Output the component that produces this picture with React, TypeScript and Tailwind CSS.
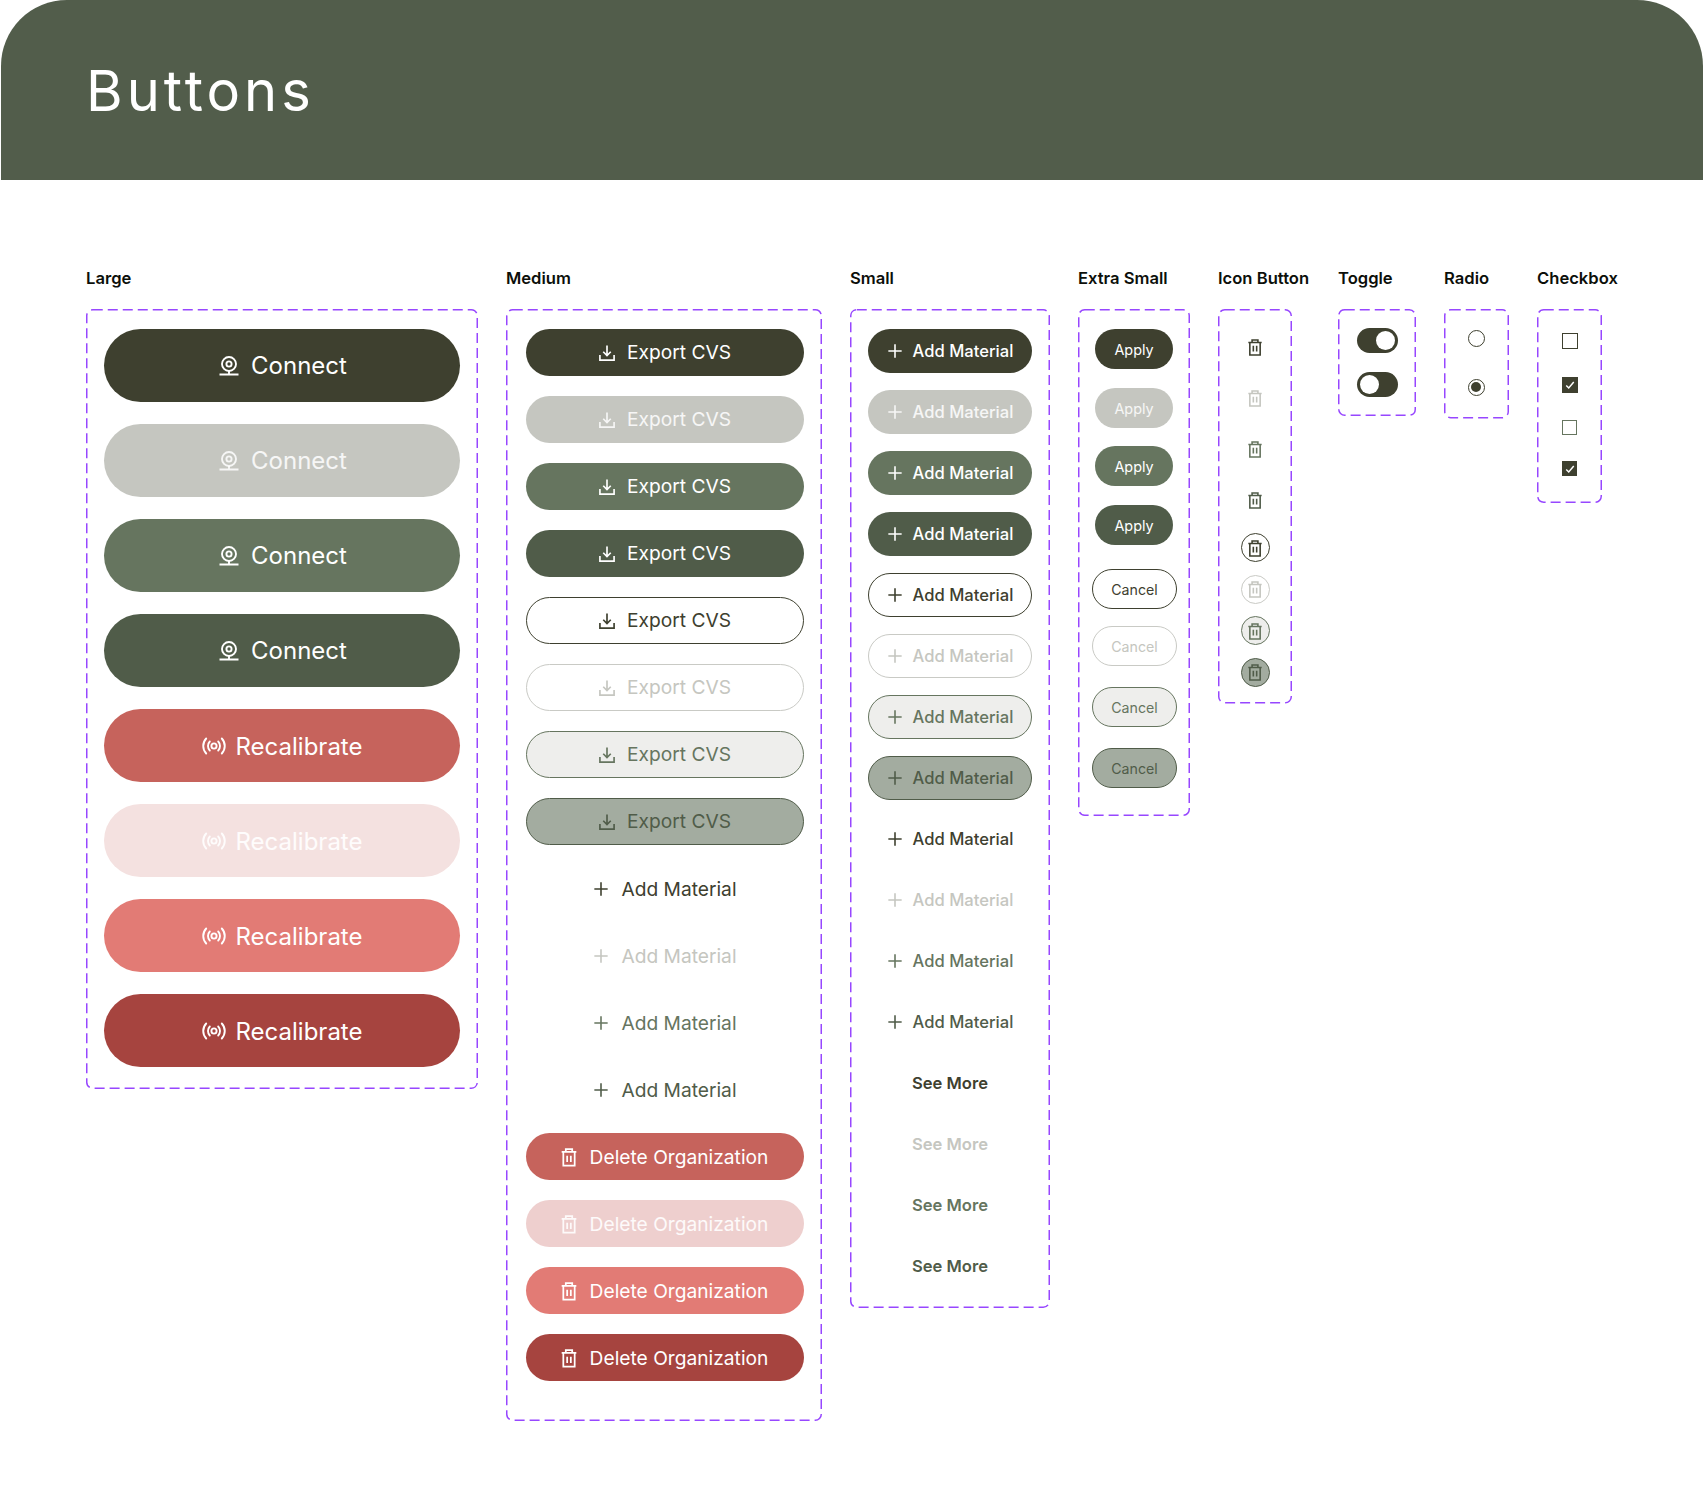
import React from "react";

type IconProps = { size: number; sw?: number };

const Webcam = ({ size, sw = 1.9 }: IconProps) => (
  <svg width={size} height={size} viewBox="0 0 24 24" fill="none" stroke="currentColor" strokeWidth={sw}>
    <circle cx="12" cy="10" r="7" />
    <circle cx="12" cy="10" r="2.6" />
    <path d="M2.5 20.5h19M12 17v3.5" />
  </svg>
);

const Broadcast = ({ size, sw = 1.9 }: IconProps) => (
  <svg width={size} height={size} viewBox="0 0 24 24" fill="none" stroke="currentColor" strokeWidth={sw} strokeLinecap="round">
    <circle cx="12" cy="12" r="2.6" />
    <path d="M7.8 7.5a6.5 6.5 0 0 0 0 9M16.2 7.5a6.5 6.5 0 0 1 0 9M4.2 4.5a11 11 0 0 0 0 15M19.8 4.5a11 11 0 0 1 0 15" />
  </svg>
);

const Download = ({ size, sw = 2 }: IconProps) => (
  <svg width={size} height={size} viewBox="0 0 24 24" fill="none" stroke="currentColor" strokeWidth={sw}>
    <path d="M12 3v12M7.5 10.5l4.5 4.5 4.5-4.5M3.5 14.5v6h17v-6" />
  </svg>
);

const Trash = ({ size, sw = 1.9 }: IconProps) => (
  <svg width={size} height={size} viewBox="0 0 24 24" fill="none" stroke="currentColor" strokeWidth={sw}>
    <path d="M4 6.5h16M8.5 6.5V3.5h7v3M5.8 6.5v15h12.4v-15M10 10.5v7M14 10.5v7" />
  </svg>
);

const Plus = ({ size, sw = 1.9 }: IconProps) => (
  <svg width={size} height={size} viewBox="0 0 24 24" fill="none" stroke="currentColor" strokeWidth={sw}>
    <path d="M12 4v16M4 12h16" />
  </svg>
);

const Check = () => (
  <svg width="10" height="10" viewBox="0 0 12 12" fill="none" stroke="#ffffff" strokeWidth="1.8">
    <path d="M1.5 6.5l3 3 6-7" />
  </svg>
);

const Box = ({ className, children }: { className: string; children: React.ReactNode }) => (
  <div className={`relative flex flex-col items-center ${className}`}>
    <svg className="absolute inset-0 w-full h-full pointer-events-none" fill="none">
      <rect
        x="0.75"
        y="0.75"
        rx="6"
        className="[width:calc(100%-1.5px)] [height:calc(100%-1.5px)]"
        stroke="#9747FF"
        strokeWidth="1.5"
        strokeDasharray="10 5"
      />
    </svg>
    {children}
  </div>
);

const Column = ({ label, width = "", children }: { label: string; width?: string; children: React.ReactNode }) => (
  <div className={`flex flex-col items-start shrink-0 ${width}`}>
    <div className="h-5 leading-5 text-[16.6px] font-semibold text-[#0c0f0a] mb-[21px] whitespace-nowrap">{label}</div>
    {children}
  </div>
);

const fills = [
  "bg-[#3E402F] text-white",
  "bg-[#C5C6C0] text-white/85",
  "bg-[#66755F] text-white",
  "bg-[#505C49] text-white",
];
const outlines = [
  "bg-white border-[1.5px] border-[#3E402F] text-[#3E402F]",
  "bg-white border-[1.5px] border-[#C9CAC5] text-[#C5C6C0]",
  "bg-[#EEEEEC] border-[1.5px] border-[#66755F] text-[#66755F]",
  "bg-[#A3ACA0] border-[1.5px] border-[#505C49] text-[#505C49]",
];
const ghosts = ["text-[#3E402F]", "text-[#C5C6C0]", "text-[#66755F]", "text-[#505C49]"];
const redsLarge = [
  "bg-[#C6635C] text-white",
  "bg-[#F4E1E0] text-white/90",
  "bg-[#E27B75] text-white",
  "bg-[#A6443F] text-white",
];
const redsMedium = [
  "bg-[#C6635C] text-white",
  "bg-[#EECFCE] text-white/90",
  "bg-[#E27B75] text-white",
  "bg-[#A6443F] text-white",
];

const Large = ({ tone, icon, text, pad }: { tone: string; icon: React.ReactNode; text: string; pad: string }) => (
  <div className={`w-[356px] h-[73px] rounded-full flex items-center justify-center gap-[10px] text-[24px] ${tone}`}>
    {icon}
    <span className={pad}>{text}</span>
  </div>
);

const Medium = ({ tone, icon, text, pad = "pt-px" }: { tone: string; icon: React.ReactNode; text: string; pad?: string }) => (
  <div className={`w-[278px] h-[47px] pr-[2px] rounded-full flex items-center justify-center gap-[10px] text-[19.2px] ${tone}`}>
    {icon}
    <span className={pad}>{text}</span>
  </div>
);

const Small = ({ tone, icon, text }: { tone: string; icon?: React.ReactNode; text: string }) => (
  <div className={`w-[164px] h-[44px] rounded-full flex items-center justify-center gap-2 text-[16.6px] ${tone}`}>
    {icon}
    <span className="pt-px">{text}</span>
  </div>
);

const Pill = ({ tone, w, fs, text }: { tone: string; w: string; fs: string; text: string }) => (
  <div className={`h-[40px] pt-[2px] rounded-full flex items-center justify-center ${w} ${fs} ${tone}`}>{text}</div>
);

const Rows = ({ tones, render }: { tones: string[]; render: (t: string, i: number) => React.ReactNode }) => (
  <>{tones.map((t, i) => <React.Fragment key={i}>{render(t, i)}</React.Fragment>)}</>
);

export default function App() {
  return (
    <div className="w-[1703px] h-[1507px] bg-white [font-family:Inter,sans-serif]">
      <header className="ml-px h-[180px] bg-[#525D4B] rounded-t-[66px] flex items-center pl-[85px]">
        <h1 className="pt-[2px] text-[56px] leading-none text-white tracking-[4px] font-normal">Buttons</h1>
      </header>

      <main className="flex items-start gap-[28px] pl-[86px] pt-[88px]">
        <Column label="Large">
          <Box className="w-[392px] pt-[20px] pb-[22px] gap-[22px]">
            <Rows tones={fills} render={(t) => <Large tone={t} icon={<Webcam size={24} />} text="Connect" pad="" />} />
            <Rows tones={redsLarge} render={(t) => <Large tone={t} icon={<Broadcast size={24} />} text="Recalibrate" pad="pt-[2px]" />} />
          </Box>
        </Column>

        <Column label="Medium">
          <Box className="w-[316px] pl-[2px] pt-[20px] pb-[40px] gap-[20px]">
            <Rows tones={fills} render={(t) => <Medium tone={t} icon={<Download size={20} />} text="Export CVS" pad="" />} />
            <Rows tones={outlines} render={(t) => <Medium tone={t} icon={<Download size={20} />} text="Export CVS" pad="" />} />
            <Rows tones={ghosts} render={(t) => <Medium tone={t} icon={<Plus size={20} />} text="Add Material" />} />
            <Rows tones={redsMedium} render={(t) => <Medium tone={`${t} pr-[4px]`} icon={<Trash size={22} />} text="Delete Organization" />} />
          </Box>
        </Column>

        <Column label="Small">
          <Box className="w-[200px] pt-[20px] pb-[20px] gap-[17px]">
            <Rows tones={fills} render={(t) => <Small tone={`${t} font-[450] pr-[2px]`} icon={<Plus size={20} />} text="Add Material" />} />
            <Rows tones={outlines} render={(t) => <Small tone={`${t} font-[450] pr-[2px]`} icon={<Plus size={20} />} text="Add Material" />} />
            <Rows tones={ghosts} render={(t) => <Small tone={`${t} font-[450] pr-[2px]`} icon={<Plus size={20} />} text="Add Material" />} />
            <Rows tones={ghosts} render={(t) => <Small tone={`${t} font-semibold`} text="See More" />} />
          </Box>
        </Column>

        <Column label="Extra Small">
          <Box className="w-[112px] pt-[20px] pb-[28px]">
            <div className="flex flex-col items-center gap-[18.5px]">
              <Rows tones={fills} render={(t) => <Pill tone={t} w="w-[78px]" fs="text-[14.4px]" text="Apply" />} />
            </div>
            <div className="flex flex-col items-center ml-px mt-[24.5px]">
              <Pill tone={outlines[0]} w="w-[85px]" fs="text-[14.2px]" text="Cancel" />
              <div className="mt-[17px]"><Pill tone={outlines[1]} w="w-[85px]" fs="text-[14.2px]" text="Cancel" /></div>
              <div className="mt-[21px]"><Pill tone={outlines[2]} w="w-[85px]" fs="text-[14.2px]" text="Cancel" /></div>
              <div className="mt-[21px]"><Pill tone={outlines[3]} w="w-[85px]" fs="text-[14.2px]" text="Cancel" /></div>
            </div>
          </Box>
        </Column>

        <Column label="Icon Button" width="w-[92px]">
          <Box className="w-[74px] pt-[12.5px] pb-[17px]">
            <Rows tones={ghosts} render={(t) => (
              <div className={`h-[51px] flex items-center justify-center ${t}`}><Trash size={20} /></div>
            )} />
            <div className="mt-[7.5px] flex flex-col gap-[12.5px]">
              <Rows tones={outlines} render={(t) => (
                <div className={`w-[29px] h-[29px] rounded-full flex items-center justify-center ${t}`}><Trash size={20} /></div>
              )} />
            </div>
          </Box>
        </Column>

        <Column label="Toggle">
          <Box className="w-[78px] pt-[19px] pb-[19px] gap-[19px]">
            <div className="w-[41px] h-[25px] rounded-full bg-[#3E402F] flex items-center justify-end p-[3px]">
              <div className="w-[19px] h-[19px] rounded-full bg-white" />
            </div>
            <div className="w-[41px] h-[25px] rounded-full bg-[#3E402F] flex items-center justify-start p-[3px]">
              <div className="w-[19px] h-[19px] rounded-full bg-white" />
            </div>
          </Box>
        </Column>

        <Column label="Radio">
          <Box className="w-[65px] pr-px pt-[21px] pb-[23px] gap-[31.5px]">
            <div className="w-[17px] h-[17px] rounded-full border-[1.5px] border-[#3E402F]" />
            <div className="w-[17px] h-[17px] rounded-full border-[1.5px] border-[#3E402F] flex items-center justify-center">
              <div className="w-[10px] h-[10px] rounded-full bg-[#3E402F]" />
            </div>
          </Box>
        </Column>

        <Column label="Checkbox">
          <Box className="w-[65px] pt-[24px] pb-[27px]">
            <div className="w-4 h-4 border-[1.5px] border-[#3E402F]" />
            <div className="mt-[28px] w-4 h-4 bg-[#3E402F] flex items-center justify-center"><Check /></div>
            <div className="mt-[27px] w-[15px] h-[15px] border-[1.5px] border-[#66755F]" />
            <div className="mt-[26px] w-[15px] h-[15px] bg-[#3E402F] flex items-center justify-center"><Check /></div>
          </Box>
        </Column>
      </main>
    </div>
  );
}
